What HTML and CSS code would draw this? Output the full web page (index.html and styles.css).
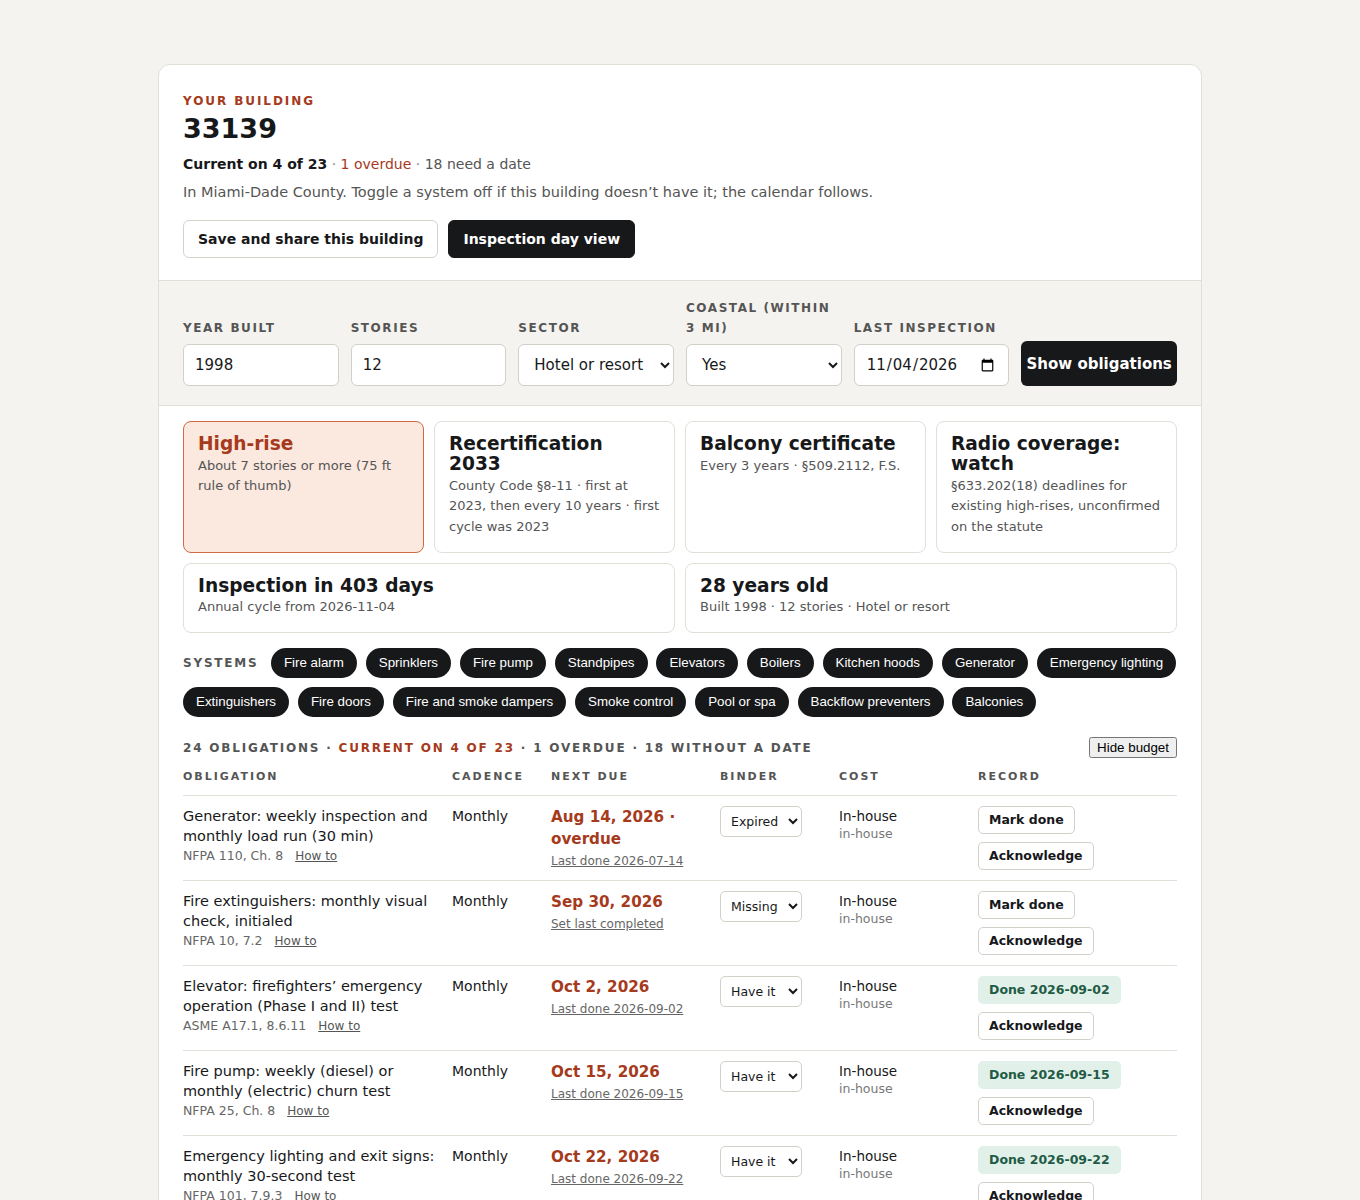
FILE: index.html
```html
<!DOCTYPE html>
<html lang="en">
<head>
<meta charset="utf-8">
<title>33139 · Building obligations</title>
<link rel="stylesheet" href="styles.css">
</head>
<body>
<main class="sheet">
  <header class="intro">
    <p class="eyebrow">Your building</p>
    <h1 class="zip">33139</h1>
    <p class="status"><strong>Current on 4 of 23</strong> <span class="sep">·</span> <span class="overdue">1 overdue</span> <span class="sep">·</span> 18 need a date</p>
    <p class="note">In Miami-Dade County. Toggle a system off if this building doesn’t have it; the calendar follows.</p>
    <div class="actions">
      <button type="button" class="btn btn-outline">Save and share this building</button>
      <button type="button" class="btn btn-solid">Inspection day view</button>
    </div>
  </header>

  <form class="facts">
    <label class="field">
      <span class="field-label">Year built</span>
      <input class="control" type="text" value="1998">
    </label>
    <label class="field">
      <span class="field-label">Stories</span>
      <input class="control" type="text" value="12">
    </label>
    <label class="field">
      <span class="field-label">Sector</span>
      <select class="control">
        <option>Hotel or resort</option>
        <option>Residential condo</option>
        <option>Office</option>
      </select>
    </label>
    <label class="field">
      <span class="field-label">Coastal (within 3 mi)</span>
      <select class="control">
        <option>Yes</option>
        <option>No</option>
      </select>
    </label>
    <label class="field">
      <span class="field-label">Last inspection</span>
      <input class="control" type="date" value="2026-11-04">
    </label>
    <button type="button" class="btn-go">Show obligations</button>
  </form>

  <section class="content">
    <div class="summary">
      <div class="card card-alert">
        <div class="card-title">High-rise</div>
        <div class="card-sub">About 7 stories or more (75 ft rule of thumb)</div>
      </div>
      <div class="card">
        <div class="card-title">Recertification 2033</div>
        <div class="card-sub">County Code §8-11 · first at 2023, then every 10 years · first cycle was 2023</div>
      </div>
      <div class="card">
        <div class="card-title">Balcony certificate</div>
        <div class="card-sub">Every 3 years · §509.2112, F.S.</div>
      </div>
      <div class="card">
        <div class="card-title">Radio coverage: watch</div>
        <div class="card-sub">§633.202(18) deadlines for existing high-rises, unconfirmed on the statute</div>
      </div>
      <div class="card card-wide">
        <div class="card-title">Inspection in 403 days</div>
        <div class="card-sub">Annual cycle from 2026-11-04</div>
      </div>
      <div class="card card-wide">
        <div class="card-title">28 years old</div>
        <div class="card-sub">Built 1998 · 12 stories · Hotel or resort</div>
      </div>
    </div>

    <div class="systems">
      <span class="systems-label">Systems</span>
      <button type="button" class="pill">Fire alarm</button>
      <button type="button" class="pill">Sprinklers</button>
      <button type="button" class="pill">Fire pump</button>
      <button type="button" class="pill">Standpipes</button>
      <button type="button" class="pill">Elevators</button>
      <button type="button" class="pill">Boilers</button>
      <button type="button" class="pill">Kitchen hoods</button>
      <button type="button" class="pill">Generator</button>
      <button type="button" class="pill">Emergency lighting</button>
      <button type="button" class="pill">Extinguishers</button>
      <button type="button" class="pill">Fire doors</button>
      <button type="button" class="pill">Fire and smoke dampers</button>
      <button type="button" class="pill">Smoke control</button>
      <button type="button" class="pill">Pool or spa</button>
      <button type="button" class="pill">Backflow preventers</button>
      <button type="button" class="pill">Balconies</button>
    </div>

    <div class="ledger-head">
      <p class="ledger-count">24 obligations · <span class="accent">Current on 4 of 23</span> · 1 overdue · 18 without a date</p>
      <button type="button" class="toggle">Hide budget</button>
    </div>

    <table class="ledger">
      <colgroup>
        <col class="c-name"><col class="c-cadence"><col class="c-due"><col class="c-binder"><col class="c-cost"><col class="c-record">
      </colgroup>
      <thead>
        <tr><th>Obligation</th><th>Cadence</th><th>Next due</th><th>Binder</th><th>Cost</th><th>Record</th></tr>
      </thead>
      <tbody>
        <tr>
          <td><div class="task">Generator: weekly inspection and monthly load run (30 min)</div><div class="cite">NFPA 110, Ch. 8 <a class="howto" href="#">How to</a></div></td>
          <td>Monthly</td>
          <td><div class="due">Aug 14, 2026 · overdue</div><a class="last" href="#">Last done 2026-07-14</a></td>
          <td><select class="binder"><option>Have it</option><option>Missing</option><option selected>Expired</option></select></td>
          <td><div class="cost">In-house</div><div class="cost-note">in-house</div></td>
          <td><div class="record"><button type="button" class="rec-btn">Mark done</button><button type="button" class="rec-btn">Acknowledge</button></div></td>
        </tr>
        <tr>
          <td><div class="task">Fire extinguishers: monthly visual check, initialed</div><div class="cite">NFPA 10, 7.2 <a class="howto" href="#">How to</a></div></td>
          <td>Monthly</td>
          <td><div class="due">Sep 30, 2026</div><a class="last" href="#">Set last completed</a></td>
          <td><select class="binder"><option>Have it</option><option selected>Missing</option><option>Expired</option></select></td>
          <td><div class="cost">In-house</div><div class="cost-note">in-house</div></td>
          <td><div class="record"><button type="button" class="rec-btn">Mark done</button><button type="button" class="rec-btn">Acknowledge</button></div></td>
        </tr>
        <tr>
          <td><div class="task">Elevator: firefighters’ emergency operation (Phase I and II) test</div><div class="cite">ASME A17.1, 8.6.11 <a class="howto" href="#">How to</a></div></td>
          <td>Monthly</td>
          <td><div class="due">Oct 2, 2026</div><a class="last" href="#">Last done 2026-09-02</a></td>
          <td><select class="binder"><option selected>Have it</option><option>Missing</option><option>Expired</option></select></td>
          <td><div class="cost">In-house</div><div class="cost-note">in-house</div></td>
          <td><div class="record"><span class="done">Done 2026-09-02</span><button type="button" class="rec-btn">Acknowledge</button></div></td>
        </tr>
        <tr>
          <td><div class="task">Fire pump: weekly (diesel) or monthly (electric) churn test</div><div class="cite">NFPA 25, Ch. 8 <a class="howto" href="#">How to</a></div></td>
          <td>Monthly</td>
          <td><div class="due">Oct 15, 2026</div><a class="last" href="#">Last done 2026-09-15</a></td>
          <td><select class="binder"><option selected>Have it</option><option>Missing</option><option>Expired</option></select></td>
          <td><div class="cost">In-house</div><div class="cost-note">in-house</div></td>
          <td><div class="record"><span class="done">Done 2026-09-15</span><button type="button" class="rec-btn">Acknowledge</button></div></td>
        </tr>
        <tr>
          <td><div class="task">Emergency lighting and exit signs: monthly 30-second test</div><div class="cite">NFPA 101, 7.9.3 <a class="howto" href="#">How to</a></div></td>
          <td>Monthly</td>
          <td><div class="due">Oct 22, 2026</div><a class="last" href="#">Last done 2026-09-22</a></td>
          <td><select class="binder"><option selected>Have it</option><option>Missing</option><option>Expired</option></select></td>
          <td><div class="cost">In-house</div><div class="cost-note">in-house</div></td>
          <td><div class="record"><span class="done">Done 2026-09-22</span><button type="button" class="rec-btn">Acknowledge</button></div></td>
        </tr>
      </tbody>
    </table>
  </section>
</main>
</body>
</html>
```

FILE: styles.css
```css
* { box-sizing: border-box; }

body {
  margin: 0;
  padding: 64px 0;
  background: #f4f3ef;
  color: #17181a;
  font-family: "DejaVu Sans", "Noto Sans", sans-serif;
  font-size: 14px;
  line-height: 20px;
}

.sheet {
  width: 1044px;
  margin: 0 auto;
  background: #fff;
  border: 1px solid #e2dfd8;
  border-radius: 12px;
  overflow: hidden;
}

/* ---- intro ---- */
.intro {
  padding: 27px 24px 22px;
  border-bottom: 1px solid #e2dfd8;
}
.eyebrow {
  margin: 0;
  font-size: 12px;
  line-height: 18px;
  font-weight: 700;
  letter-spacing: .16em;
  text-transform: uppercase;
  color: #a63a1c;
}
.zip {
  margin: 3px 0 0;
  font-size: 27px;
  line-height: 32px;
  font-weight: 700;
}
.status { margin: 9px 0 0; color: #555; }
.status strong { color: #17181a; }
.status .sep { color: #888; }
.overdue { color: #a63a1c; }
.note { margin: 8px 0 0; font-size: 14.5px; color: #555; }

.actions { display: flex; gap: 10px; margin-top: 18px; }
.btn {
  font: 700 14px/20px "DejaVu Sans", sans-serif;
  padding: 8px 14px;
  border-radius: 6px;
  border: 1px solid #d5d2cb;
  background: #fff;
  color: #17181a;
}
.btn-solid { background: #17181a; border-color: #17181a; color: #fff; }

/* ---- building facts ---- */
.facts {
  display: grid;
  grid-template-columns: repeat(6, minmax(0, 1fr));
  column-gap: 12px;
  align-items: end;
  padding: 17px 24px 19px;
  background: #f4f3ef;
  border-bottom: 1px solid #e2dfd8;
}
.field { display: flex; flex-direction: column; gap: 6px; min-width: 0; }
.field-label {
  font-size: 12px;
  line-height: 20px;
  font-weight: 700;
  letter-spacing: .13em;
  text-transform: uppercase;
  color: #555;
}
.control {
  width: 100%;
  min-width: 0;
  height: 42px;
  padding: 0 11px;
  font: 15px "DejaVu Sans", sans-serif;
  color: #17181a;
  background: #fff;
  border: 1px solid #d3d0c9;
  border-radius: 6px;
}
.btn-go {
  height: 45px;
  padding: 0 4px;
  font: 700 15px/20px "DejaVu Sans", sans-serif;
  color: #fff;
  background: #17181a;
  border: 0;
  border-radius: 6px;
  white-space: nowrap;
}

/* ---- content ---- */
.content { padding: 15px 24px 24px; }

.summary {
  display: grid;
  grid-template-columns: repeat(4, 1fr);
  gap: 10px;
}
.card {
  border: 1px solid #e2dfd8;
  border-radius: 8px;
  padding: 12px 14px 14px;
}
.card-wide { grid-column: span 2; }
.card-title {
  padding-right: 3px;
  font-size: 18.6px;
  line-height: 20px;
  font-weight: 700;
}
.card-sub {
  margin-top: 1.5px;
  font-size: 13px;
  line-height: 20.8px;
  color: #555;
}
.card-alert { background: #fbe8df; border-color: #cf6a44; }
.card-alert .card-title { color: #a63a1c; }

.systems {
  display: flex;
  flex-wrap: wrap;
  align-items: center;
  gap: 9px 8.9px;
  margin-top: 15px;
}
.systems-label {
  width: 79px;
  font-size: 12px;
  line-height: 16px;
  font-weight: 700;
  letter-spacing: .15em;
  text-transform: uppercase;
  color: #555;
}
.pill {
  font: 13.333px/16px "Liberation Sans", Arial, sans-serif;
  padding: 7px 13px;
  border: 0;
  border-radius: 999px;
  background: #17181a;
  color: #fff;
}

.ledger-head {
  display: flex;
  align-items: center;
  justify-content: space-between;
  margin-top: 20px;
}
.ledger-count {
  margin: 0;
  font-size: 12px;
  line-height: 16px;
  font-weight: 700;
  letter-spacing: .15em;
  text-transform: uppercase;
  color: #555;
}
.ledger-count .accent { color: #a63a1c; }
.toggle { font-family: "Liberation Sans", Arial, sans-serif; font-size: 13.333px; margin: 0; }

.ledger {
  width: 100%;
  border-collapse: collapse;
  table-layout: fixed;
}
.c-name { width: 269px; }
.c-cadence { width: 99px; }
.c-due { width: 169px; }
.c-binder { width: 119px; }
.c-cost { width: 139px; }
.c-record { width: 199px; }

.ledger th {
  text-align: left;
  padding: 11px 12px 10px 0;
  font-size: 11px;
  line-height: 16px;
  font-weight: 700;
  letter-spacing: .18em;
  text-transform: uppercase;
  color: #555;
  border-bottom: 1px solid #e2dfd8;
}
.ledger td {
  vertical-align: top;
  padding: 10px 12px 10px 0;
  border-bottom: 1px solid #e2dfd8;
}
.task { font-size: 14.5px; line-height: 20px; }
.cite { font-size: 12.5px; line-height: 20px; color: #666; }
.howto { margin-left: 8px; font-size: 12px; color: #555; }
.due {
  font-size: 15.2px;
  line-height: 22px;
  font-weight: 700;
  color: #a63a1c;
}
.last {
  display: inline-block;
  margin-top: 2px;
  font-size: 12px;
  line-height: 18px;
  color: #666;
}
.binder {
  width: 82px;
  height: 31px;
  padding: 0 4px 0 6px;
  font: 12.5px "DejaVu Sans", sans-serif;
  color: #17181a;
  background: #fff;
  border: 1px solid #d3d0c9;
  border-radius: 5px;
}
.cost { font-size: 13.5px; line-height: 20px; }
.cost-note { font-size: 12.5px; line-height: 16px; color: #777; }
.record {
  display: flex;
  flex-direction: column;
  align-items: flex-start;
  gap: 8px;
}
.rec-btn {
  height: 28px;
  padding: 0 10px;
  font: 700 12.5px/20px "DejaVu Sans", sans-serif;
  color: #17181a;
  background: #fff;
  border: 1px solid #d3d0c9;
  border-radius: 5px;
}
.done {
  display: inline-flex;
  align-items: center;
  height: 28px;
  padding: 0 11px;
  font-size: 12.5px;
  font-weight: 700;
  color: #1f5b45;
  background: #e1f1ea;
  border-radius: 5px;
}
```
